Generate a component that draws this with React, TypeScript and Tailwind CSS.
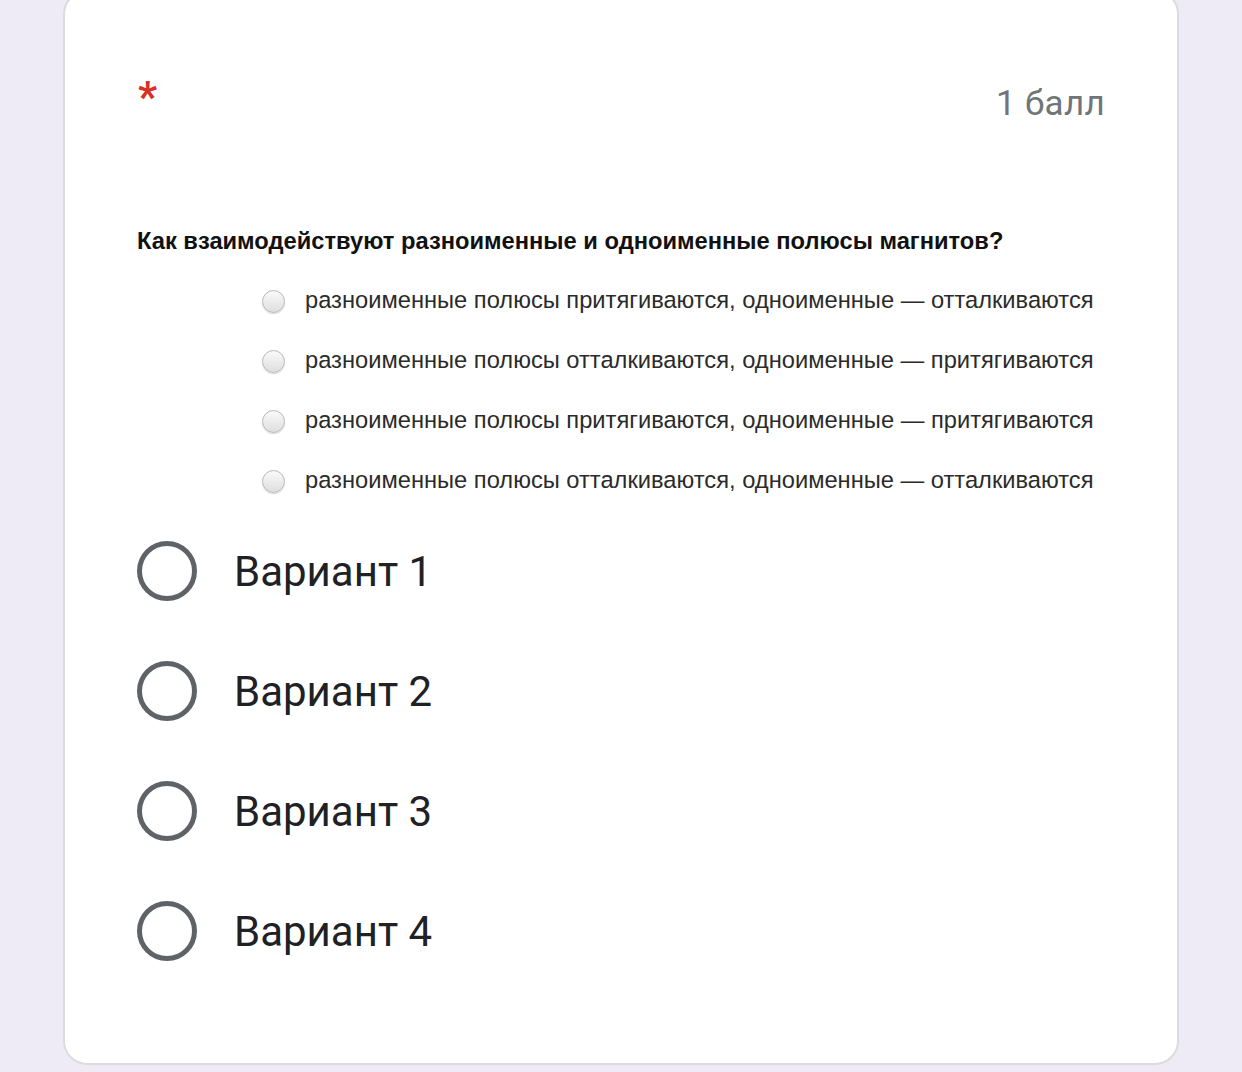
import React from 'react';

const imageOptions = [
  'разноименные полюсы притягиваются, одноименные — отталкиваются',
  'разноименные полюсы отталкиваются, одноименные — притягиваются',
  'разноименные полюсы притягиваются, одноименные — притягиваются',
  'разноименные полюсы отталкиваются, одноименные — отталкиваются',
];

const choices = ['Вариант 1', 'Вариант 2', 'Вариант 3', 'Вариант 4'];

function App() {
  return (
    <div className="min-h-screen w-full bg-[#eeebf6] font-['Roboto',sans-serif] overflow-hidden">
      <div className="ml-[63px] w-[1116px] mt-[-10px] bg-white border-2 border-[#dadce0] rounded-[24px] px-[72px] pb-[72px]">
        {/* header: required mark + points */}
        <div className="h-[220px] flex justify-between items-start">
          <span className="mt-[84px] ml-[1px] text-[42px] leading-[42px] font-bold text-[#d93025]">*</span>
          <span className="mt-[94px] text-[35px] leading-[36px] tracking-[0.3px] text-[#70757a]">1 балл</span>
        </div>

        {/* question image */}
        <div className="font-['Liberation_Sans',Arial,sans-serif]">
          <div className="h-[59px] flex items-center text-[23.7px] font-bold text-[#111]">
            Как взаимодействуют разноименные и одноименные полюсы магнитов?
          </div>
          {imageOptions.map((t) => (
            <div key={t} className="h-[60px] flex items-center pl-[125px]">
              <span className="w-[23px] h-[23px] rounded-full border border-[#b9b9b9] bg-gradient-to-b from-[#fafafa] to-[#dedede] shadow-[0_1px_1px_rgba(0,0,0,0.15)]" />
              <span className="ml-[20px] text-[23.7px] text-[#2b2b2b]">{t}</span>
            </div>
          ))}
        </div>

        {/* answer choices */}
        <div>
          {choices.map((c) => (
            <div key={c} className="h-[120px] flex items-center">
              <span className="w-[60px] h-[60px] rounded-full border-[5px] border-[#5f6368]" />
              <span className="ml-[37px] text-[42px] text-[#202124]">{c}</span>
            </div>
          ))}
        </div>
      </div>
    </div>
  );
}

export default App;
